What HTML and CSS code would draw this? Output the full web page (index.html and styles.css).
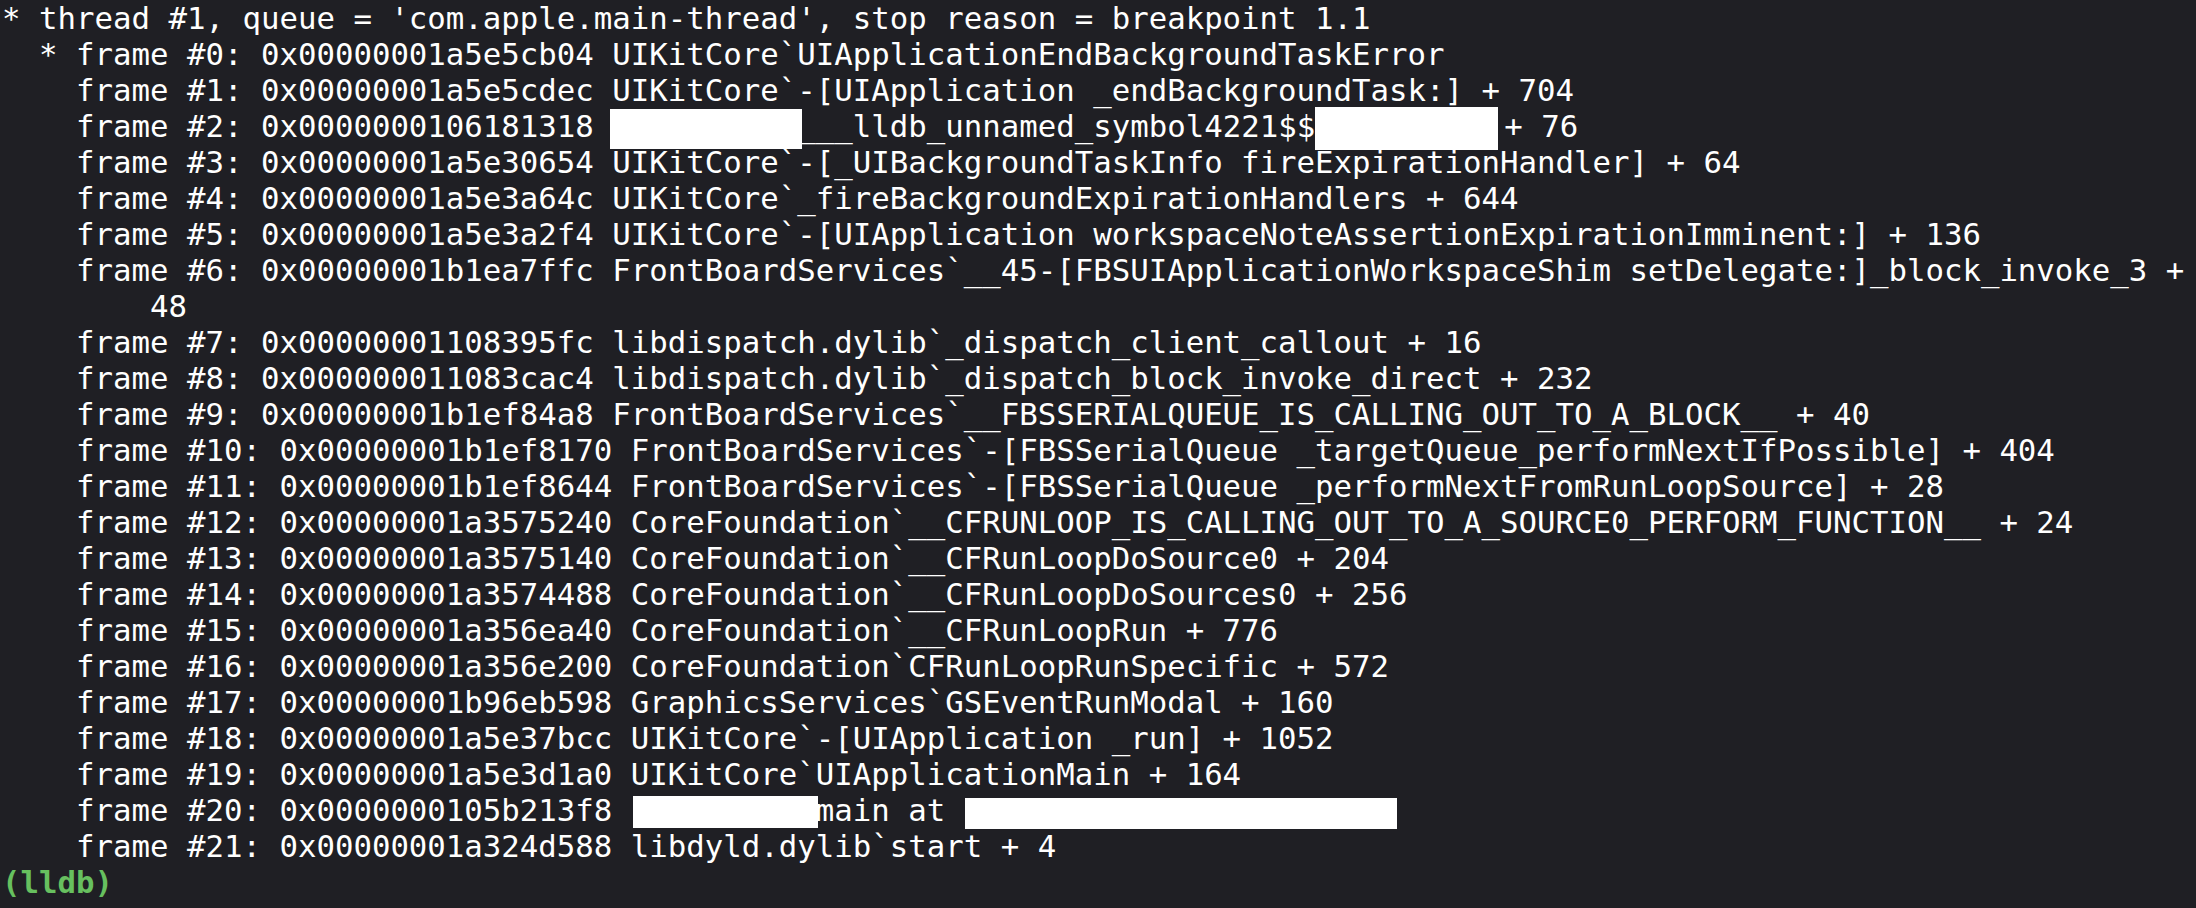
FILE: index.html
```html
<!DOCTYPE html>
<html lang="en">
<head>
    <meta charset="UTF-8">
    <meta name="viewport" content="width=device-width, initial-scale=1.0">
    <title>lldb backtrace</title>
    <link rel="stylesheet" href="styles.css">
</head>
<body>
<pre class="console">* thread #1, queue = 'com.apple.main-thread', stop reason = breakpoint 1.1
  * frame #0: 0x00000001a5e5cb04 UIKitCore`UIApplicationEndBackgroundTaskError
    frame #1: 0x00000001a5e5cdec UIKitCore`-[UIApplication _endBackgroundTask:] + 704
    frame #2: 0x0000000106181318 <span class="redact redact-mod"></span>___lldb_unnamed_symbol4221$$<span class="redact redact-sym"></span>+ 76
    frame #3: 0x00000001a5e30654 UIKitCore`-[_UIBackgroundTaskInfo fireExpirationHandler] + 64
    frame #4: 0x00000001a5e3a64c UIKitCore`_fireBackgroundExpirationHandlers + 644
    frame #5: 0x00000001a5e3a2f4 UIKitCore`-[UIApplication workspaceNoteAssertionExpirationImminent:] + 136
    frame #6: 0x00000001b1ea7ffc FrontBoardServices`__45-[FBSUIApplicationWorkspaceShim setDelegate:]_block_invoke_3 +
        48
    frame #7: 0x00000001108395fc libdispatch.dylib`_dispatch_client_callout + 16
    frame #8: 0x000000011083cac4 libdispatch.dylib`_dispatch_block_invoke_direct + 232
    frame #9: 0x00000001b1ef84a8 FrontBoardServices`__FBSSERIALQUEUE_IS_CALLING_OUT_TO_A_BLOCK__ + 40
    frame #10: 0x00000001b1ef8170 FrontBoardServices`-[FBSSerialQueue _targetQueue_performNextIfPossible] + 404
    frame #11: 0x00000001b1ef8644 FrontBoardServices`-[FBSSerialQueue _performNextFromRunLoopSource] + 28
    frame #12: 0x00000001a3575240 CoreFoundation`__CFRUNLOOP_IS_CALLING_OUT_TO_A_SOURCE0_PERFORM_FUNCTION__ + 24
    frame #13: 0x00000001a3575140 CoreFoundation`__CFRunLoopDoSource0 + 204
    frame #14: 0x00000001a3574488 CoreFoundation`__CFRunLoopDoSources0 + 256
    frame #15: 0x00000001a356ea40 CoreFoundation`__CFRunLoopRun + 776
    frame #16: 0x00000001a356e200 CoreFoundation`CFRunLoopRunSpecific + 572
    frame #17: 0x00000001b96eb598 GraphicsServices`GSEventRunModal + 160
    frame #18: 0x00000001a5e37bcc UIKitCore`-[UIApplication _run] + 1052
    frame #19: 0x00000001a5e3d1a0 UIKitCore`UIApplicationMain + 164
    frame #20: 0x0000000105b213f8 <span class="redact redact-main"></span>main at <span class="redact redact-path"></span>
    frame #21: 0x00000001a324d588 libdyld.dylib`start + 4
<span class="prompt">(lldb)</span></pre>
</body>
</html>
```

FILE: styles.css
```css
html, body {
    margin: 0;
    padding: 0;
    height: 908px;
    overflow: hidden;
    background: #1f1f24;
}
.console {
    margin: 0;
    padding: 0 0 0 2px;
    height: 908px;
    box-sizing: border-box;
    overflow: hidden;
    font-family: "DejaVu Sans Mono", "Liberation Mono", monospace;
    font-size: 30.73px;
    line-height: 36px;
    color: #ffffff;
    white-space: pre;
}
.prompt {
    color: #67c05f;
    font-weight: bold;
}
.redact {
    display: inline-block;
    vertical-align: top;
    background: #ffffff;
}
.redact-mod {
    width: 192px;
    height: 40px;
    margin: 1px -4.5px -5px -2.5px;
}
.redact-sym {
    width: 182.5px;
    height: 43px;
    margin: -1px 6.5px -6px 0;
}
.redact-main {
    width: 185px;
    height: 32px;
    margin: 4px -2px 0 2px;
}
.redact-path {
    width: 432px;
    height: 31px;
    margin: 6px 0 -1px 1px;
}
```
